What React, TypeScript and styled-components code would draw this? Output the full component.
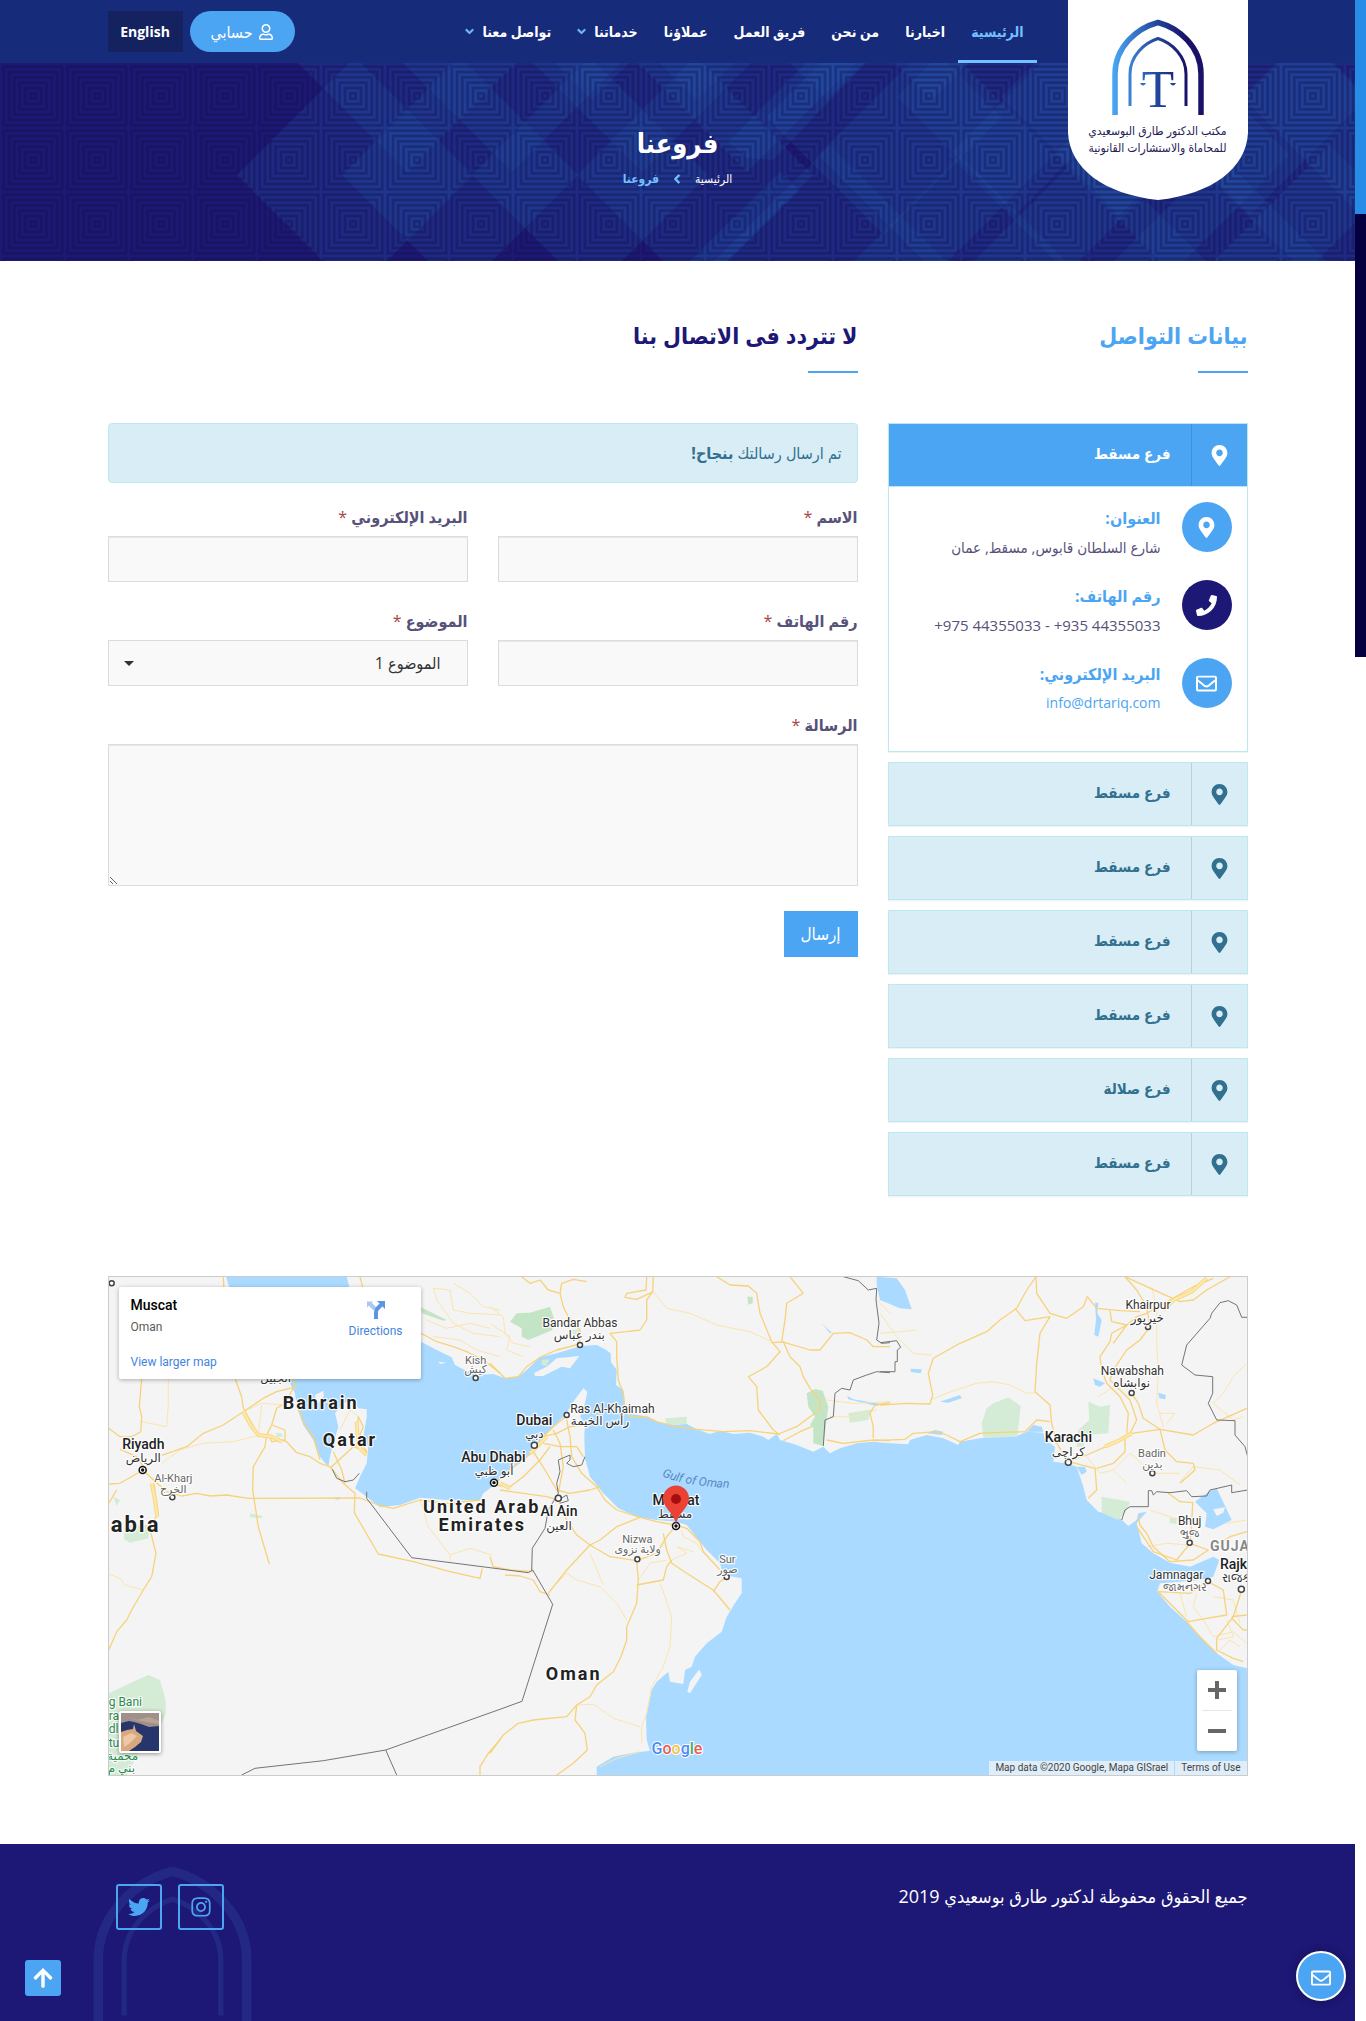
import React, { useId } from "react";
import styled, { createGlobalStyle } from "styled-components";
import {
  FaArrowUp,
  FaChevronDown,
  FaChevronLeft,
  FaInstagram,
  FaMapMarkerAlt,
  FaPhone,
  FaRegEnvelope,
  FaRegUser,
  FaTwitter,
} from "react-icons/fa";

const color = {
  navy: "#1d1775",
  header: "#172b7b",
  sky: "#4ca5f2",
  glow: "#73c0ff",
  ink: "#57527a",
  info: "#d9edf6",
  infoLine: "#bce8f1",
  infoText: "#31708f",
  field: "#f9f9f9",
  line: "#dcdcdc",
};

const GlobalStyle = createGlobalStyle`
  *, *::before, *::after { box-sizing: border-box; }
  body {
    margin: 0;
    background: #fff;
    color: ${color.ink};
    font-family: "Open Sans", "DejaVu Sans Condensed", "DejaVu Sans", sans-serif;
    font-size: 16px;
    line-height: 24px;
  }
  button, input, textarea, select { font: inherit; }
  a { color: inherit; text-decoration: none; }
  h1, h2, h3, p, ul { margin: 0; padding: 0; }
  ul { list-style: none; }
`;

const Page = styled.div`
  padding-right: 11px;
`;

const Container = styled.div`
  width: 100%;
  max-width: 1170px;
  margin: 0 auto;
  padding: 0 15px;
`;

/* ---------- scroll track ---------- */

const ScrollTrack = styled.div`
  position: fixed;
  top: 0;
  right: 0;
  width: 11px;
  height: 657px;
  background: #04003f;
  z-index: 5;
`;

const ScrollThumb = styled.div`
  height: 214px;
  background: #268ce8;
`;

/* ---------- header ---------- */

const Header = styled.header`
  background: ${color.header};
`;

const HeaderRow = styled(Container)`
  display: flex;
  align-items: center;
  height: 63px;
`;

const LogoLink = styled.a`
  position: relative;
  flex: none;
  align-self: flex-start;
  width: 180px;
  height: 63px;
  z-index: 2;
`;

const LogoShape = styled.svg`
  position: absolute;
  top: 0;
  right: 0;
  width: 180px;
  height: 200px;
`;

const LogoName = styled.span`
  position: absolute;
  top: 122px;
  right: 0;
  width: 180px;
  color: #262155;
  font-size: 12px;
  line-height: 17px;
  text-align: center;
  white-space: nowrap;
`;

const Nav = styled.nav`
  display: flex;
  align-self: stretch;
  margin-inline-start: 31px;
`;

const NavLink = styled.a<{ $active?: boolean }>`
  display: flex;
  align-items: center;
  gap: 8px;
  padding: 0 13px;
  border-top: 3px solid transparent;
  border-bottom: 3px solid ${(p) => (p.$active ? color.glow : "transparent")};
  color: ${(p) => (p.$active ? color.glow : "#fff")};
  font-size: 14px;
  font-weight: 700;
  white-space: nowrap;

  svg {
    overflow: visible;
    color: ${color.glow};
    font-size: 9px;
    stroke-width: 50px;
  }
`;

const HeaderTools = styled.div`
  display: flex;
  gap: 7px;
  margin-inline-start: auto;
`;

const AccountLink = styled.a`
  display: flex;
  align-items: center;
  justify-content: center;
  gap: 5px;
  width: 105px;
  height: 41px;
  border-radius: 21px;
  background: ${color.sky};
  color: #fff;
  font-size: 16px;
`;

const LanguageLink = styled.a`
  display: flex;
  align-items: center;
  justify-content: center;
  width: 75px;
  height: 41px;
  background: #14235f;
  color: #fff;
  font-size: 14px;
  font-weight: 700;
`;

/* ---------- banner ---------- */

const Banner = styled.section`
  position: relative;
  height: 198px;
  overflow: hidden;
  background: ${color.navy};
`;

const BannerArt = styled.svg`
  position: absolute;
  top: 0;
  left: 0;
  width: 100%;
  height: 198px;
`;

const BannerText = styled.div`
  position: relative;
  display: flex;
  flex-direction: column;
  align-items: center;
  padding-top: 58px;
  color: #fff;
`;

const BannerTitle = styled.h1`
  font-size: 27px;
  line-height: 44px;
`;

const Crumbs = styled.ol`
  display: flex;
  align-items: center;
  gap: 13px;
  margin: 0;
  padding: 0;
  list-style: none;
  font-size: 12px;
  line-height: 28px;

  svg {
    display: block;
    overflow: visible;
    color: ${color.glow};
    font-size: 10px;
    stroke-width: 50px;
  }
`;

const CurrentCrumb = styled.li`
  color: ${color.glow};
  font-weight: 700;
`;

/* ---------- content ---------- */

const Columns = styled(Container)`
  display: grid;
  grid-template-columns: 360px minmax(0, 1fr);
  gap: 30px;
  padding-top: 52px;
`;

const SectionTitle = styled.h2<{ $tone: string }>`
  display: flex;
  flex-direction: column;
  gap: 14px;
  margin-bottom: 50px;
  color: ${(p) => p.$tone};
  font-size: 23px;
  line-height: 44px;

  &::after {
    content: "";
    width: 50px;
    height: 2px;
    background: ${color.sky};
  }
`;

const BranchList = styled.div`
  display: grid;
  gap: 10px;
`;

const Branch = styled.section`
  border: 1px solid ${color.infoLine};
  background: #fff;
  box-shadow: 0 1px 1px rgba(0, 0, 0, 0.05);
`;

const BranchHeading = styled.h3`
  display: flex;
  font-size: 15px;
`;

const BranchButton = styled.button<{ $open?: boolean }>`
  display: flex;
  align-items: stretch;
  width: 100%;
  height: 62px;
  padding: 0;
  border: 0;
  background: ${(p) => (p.$open ? color.sky : color.info)};
  color: ${(p) => (p.$open ? "#fff" : color.infoText)};
  font-weight: 700;
  cursor: pointer;
`;

const BranchIcon = styled.span`
  display: flex;
  align-items: center;
  justify-content: center;
  width: 56px;
  border-left: 1px solid rgba(0, 0, 0, 0.13);
  font-size: 21px;
`;

const BranchName = styled.span`
  padding: 17px 20px;
`;

const BranchBody = styled.ul`
  display: grid;
  gap: 28px;
  padding: 15px 15px 43px;
  border-top: 1px solid ${color.infoLine};
`;

const Contact = styled.li`
  display: flex;
  gap: 21px;
  height: 50px;
`;

const ContactIcon = styled.span<{ $dark?: boolean }>`
  display: flex;
  flex: none;
  align-items: center;
  justify-content: center;
  width: 50px;
  height: 50px;
  border-radius: 50%;
  background: ${(p) => (p.$dark ? color.navy : color.sky)};
  color: #fff;
  font-size: 21px;
`;

const ContactText = styled.div`
  display: flex;
  flex-direction: column;
  font-size: 15px;
  line-height: 26px;
  white-space: nowrap;
`;

const ContactLabel = styled.strong`
  color: ${color.sky};
  font-size: 16px;
  line-height: 32px;
`;

const MailLink = styled.a`
  color: ${color.sky};
  font-size: 14px;
`;

/* ---------- form ---------- */

const Alert = styled.p`
  margin-bottom: 20px;
  padding: 17px 15px;
  border: 1px solid ${color.infoLine};
  border-radius: 4px;
  background: ${color.info};
  color: ${color.infoText};
  font-size: 16px;
`;

const Form = styled.form`
  display: grid;
  grid-template-columns: 1fr 1fr;
  column-gap: 30px;
  row-gap: 25px;
`;

const Field = styled.div<{ $wide?: boolean }>`
  display: flex;
  flex-direction: column;
  grid-column: ${(p) => (p.$wide ? "1 / -1" : "auto")};
`;

const Label = styled.label`
  height: 33px;
  font-size: 16px;
  line-height: 28px;
  font-weight: 700;
`;

const Required = styled.span`
  color: #a94442;
  font-weight: 400;
`;

const TextInput = styled.input`
  width: 100%;
  height: 46px;
  padding: 6px 12px;
  border: 1px solid ${color.line};
  border-radius: 0;
  background: ${color.field};
  box-shadow: inset 0 1px 1px rgba(0, 0, 0, 0.075);
`;

const SelectWrap = styled.div`
  position: relative;

  &::after {
    content: "";
    position: absolute;
    top: 21px;
    left: 16px;
    border: 5px solid transparent;
    border-top-color: #333;
    border-bottom: 0;
    pointer-events: none;
  }
`;

const Select = styled.select`
  width: 100%;
  height: 46px;
  padding: 0 26px;
  border: 1px solid ${color.line};
  border-radius: 0;
  background: ${color.field};
  color: #333;
  appearance: none;
`;

const TextArea = styled.textarea`
  display: block;
  width: 100%;
  height: 142px;
  padding: 6px 12px;
  border: 1px solid ${color.line};
  border-radius: 0;
  background: ${color.field};
  box-shadow: inset 0 1px 1px rgba(0, 0, 0, 0.075);
`;

const Submit = styled.button`
  justify-self: start;
  width: 74px;
  height: 46px;
  padding: 0;
  border: 0;
  background: ${color.sky};
  color: #fff;
  font-size: 17px;
`;

/* ---------- map ---------- */

const MapSection = styled(Container)`
  padding-top: 80px;
  padding-bottom: 68px;
`;

const MapFrame = styled.div`
  position: relative;
  height: 500px;
  overflow: hidden;
  border: 1px solid #ccc;
  background: #f4f4f4;
  font-family: Roboto, "DejaVu Sans", sans-serif;
`;

const MapSvg = styled.svg`
  display: block;
  width: 100%;
  height: 100%;
`;

const MapCard = styled.div`
  position: absolute;
  top: 10px;
  left: 10px;
  display: flex;
  justify-content: space-between;
  width: 302px;
  height: 92px;
  padding: 9px 18px 9px 12px;
  border-radius: 2px;
  background: #fff;
  box-shadow: 0 1px 4px rgba(0, 0, 0, 0.3);
  font-size: 12px;
  line-height: 16px;
`;

const PlaceInfo = styled.div`
  display: flex;
  flex-direction: column;
`;

const PlaceName = styled.strong`
  color: #000;
  font-size: 14px;
  font-weight: 500;
  line-height: 18px;
`;

const PlaceRegion = styled.span`
  padding-top: 5px;
  color: #5b5b5b;
`;

const MapLink = styled.a`
  margin-top: auto;
  color: #4285e0;
`;

const Directions = styled.a`
  display: flex;
  flex-direction: column;
  align-items: center;
  gap: 3px;
  padding-top: 4px;
  color: #4285e0;
`;

const Zoom = styled.div`
  position: absolute;
  right: 10px;
  bottom: 24px;
  display: grid;
  width: 40px;
  padding: 0 5px;
  border-radius: 2px;
  background: #fff;
  box-shadow: 0 1px 4px rgba(0, 0, 0, 0.3);
`;

const ZoomButton = styled.button`
  display: flex;
  align-items: center;
  justify-content: center;
  height: 40px;
  padding: 0;
  border: 0;
  background: none;

  & + & {
    height: 41px;
    border-top: 1px solid #e6e6e6;
  }
`;

const Satellite = styled.button`
  position: absolute;
  bottom: 22px;
  left: 10px;
  width: 42px;
  height: 42px;
  padding: 0;
  overflow: hidden;
  border: 2px solid #fff;
  border-radius: 2px;
  background: #26356b;
  box-shadow: 0 1px 4px rgba(0, 0, 0, 0.4);

  svg {
    display: block;
  }
`;

const Credits = styled.div`
  position: absolute;
  right: 0;
  bottom: 0;
  display: flex;
  gap: 1px;
  color: #444;
  font-size: 10px;
  line-height: 14px;
`;

const Credit = styled.span`
  padding: 0 6px;
  background: rgba(245, 245, 245, 0.7);
`;

/* ---------- footer ---------- */

const Footer = styled.footer`
  overflow: hidden;
  background: ${color.navy};
  color: #fff;
`;

const FooterRow = styled(Container)`
  position: relative;
  display: flex;
  align-items: flex-start;
  justify-content: space-between;
  height: 177px;
  padding-top: 40px;
`;

const Watermark = styled.svg`
  position: absolute;
  top: 23px;
  left: 0;
  width: 159px;
  height: 164px;
  opacity: 0.12;
`;

const Copyright = styled.p`
  font-size: 18px;
`;

const Social = styled.div`
  position: relative;
  display: flex;
  gap: 16px;
  padding-left: 8px;
`;

const SocialLink = styled.a`
  display: flex;
  align-items: center;
  justify-content: center;
  width: 46px;
  height: 46px;
  border: 2px solid ${color.sky};
  border-radius: 3px;
  color: ${color.sky};
  font-size: 22px;
`;

const ToTop = styled.button`
  position: fixed;
  bottom: 25px;
  left: 25px;
  display: flex;
  align-items: center;
  justify-content: center;
  width: 36px;
  height: 36px;
  padding: 0;
  border: 0;
  border-radius: 3px;
  background: ${color.sky};
  color: #fff;
  font-size: 22px;
`;

const MailButton = styled.button`
  position: fixed;
  right: 20px;
  bottom: 20px;
  display: flex;
  align-items: center;
  justify-content: center;
  width: 50px;
  height: 50px;
  padding: 4px 0 0;
  border: 2px solid #fff;
  border-radius: 50%;
  background: ${color.sky};
  box-shadow: 0 0 8px rgba(0, 0, 0, 0.3);
  color: #fff;
  font-size: 20px;
  z-index: 6;
`;

/* ---------- drawings ---------- */

const outerArch = "M47 115V74C47 47 69 28 90 22.500C111 28 133 47 133 74V115";
const innerArch = "M62 106V74C62 56 76 43 90 38.500C104 43 118 56 118 74V106";

function Logo() {
  const id = useId();
  return (
    <LogoLink href="#" aria-label="مكتب الدكتور طارق البوسعيدي">
      <LogoShape viewBox="0 0 180 200" aria-hidden="true">
        <defs>
          <linearGradient id={id} gradientUnits="userSpaceOnUse" x1="44" y1="70" x2="136" y2="70">
            <stop offset="0" stopColor="#4ca9f5" />
            <stop offset="0.5" stopColor="#20459a" />
            <stop offset="0.8" stopColor="#1a1268" />
          </linearGradient>
        </defs>
        <path d="M0 0H180V133C178 168 145 194 90 200C35 194 2 168 0 133Z" fill="#fff" />
        <g fill="none" stroke={`url(#${id})`}>
          <path d={outerArch} strokeWidth="5.500" />
          <path d={innerArch} strokeWidth="3" />
        </g>
        <text
          x="90"
          y="107"
          textAnchor="middle"
          fontFamily="Liberation Serif, serif"
          fontSize="53"
          fill={`url(#${id})`}
        >
          T
        </text>
        <path d="M72 83h6q-3 5-6 0z" fill="#2f6fc0" />
        <path d="M102 83h6q-3 5-6 0z" fill="#20459a" />
      </LogoShape>
      <LogoName>
        مكتب الدكتور طارق البوسعيدي
        <br />
        للمحاماة والاستشارات القانونية
      </LogoName>
    </LogoLink>
  );
}

const RADIUS = 118;
const diamonds: [number, number][] = [
  [355, 112], [460, 112], [590, 112], [695, 112],
  [407, -9], [512, -9], [642, -9], [747, -9],
  [592, -81], [697, -81], [827, -81], [932, -81],
  [936, 92], [1067, 92], [1172, 92], [1015, 34], [884, 54],
  [1119, 34], [1250, 34], [1305, 92], [1360, 34],
  [830, 200], [960, 210], [1090, 200], [1220, 210], [1330, 200],
];

function Pattern() {
  return (
    <BannerArt aria-hidden="true">
      <defs>
        <pattern id="maze" x="1" y="1" width="64" height="64" patternUnits="userSpaceOnUse">
          <g fill="none" stroke="#0d1040" strokeOpacity="0.36" strokeWidth="2.700">
            {[4, 9.3, 14.7, 20, 25.3, 30.6].map((r) => (
              <rect
                key={r}
                x={32 - r + 1.3}
                y={32 - r + 1.3}
                width={2 * r - 2.6}
                height={2 * r - 2.6}
              />
            ))}
          </g>
        </pattern>
      </defs>
      {diamonds.map(([x, y]) => (
        <polygon
          key={`${x},${y}`}
          points={`${x - RADIUS},${y} ${x},${y - RADIUS} ${x + RADIUS},${y} ${x},${y + RADIUS}`}
          fill="#2658ac"
          fillOpacity="0.27"
        />
      ))}
      <polygon points="806,0 866,0 773,97 747,95 728,79" fill="#2470c8" fillOpacity="0.2" />
      <polygon points="780,109 800,127 728,198 690,198" fill="#2470c8" fillOpacity="0.2" />
      <rect width="100%" height="198" fill="url(#maze)" />
    </BannerArt>
  );
}

/* The map is surveyed in three sheets that share a 3:1 grid; each sheet has its own origin. */
type Sheet = 0 | 1 | 2;
const sheetX = [-9, 381, 771];
const px = (s: Sheet, x: number) => sheetX[s] + x / 3;
const py = (y: number) => y / 3 - 7;
const pts = (s: Sheet, list: string) => {
  const n = list.trim().split(/[\s,]+/).map(Number);
  const out: string[] = [];
  for (let i = 0; i < n.length; i += 2) {
    out.push(`${px(s, n[i]).toFixed(1)},${py(n[i + 1]).toFixed(1)}`);
  }
  return out.join(" ");
};

const sea = [
  pts(0, "740 20 750 60 800 150 963 215 1010 240 1055 262 1065 285 1090 298 1130 315 1180 312"),
  pts(1, "45 325 85 320 110 300 150 262 200 250 250 235 275 228 320 225 345 238 362 250 363 275 380 300 378 345 400 360 405 400 412 430 475 440 500 455 540 465 590 462 620 478 660 492 690 482 730 492 780 488 820 500 835 510 860 492 870 510 920 525 970 545 1000 530 1020 550 1050 535 1100 520 1150 515 1200 520"),
  pts(2, "85 523 90 510 140 495 190 505 235 525 240 515 300 505 350 500 410 498 440 485 490 488 495 510 525 530 520 575 560 580 590 590 600 620 610 650 620 690 655 725 700 735 720 745 745 768 770 750 775 730 800 725 770 760 785 820 820 850 870 878 930 890 1000 860 1018 870 1000 920 960 930 900 935 840 940 832 965 870 1010 920 1055 960 1100 1010 1150 1060 1185 1103 1195 1110 1520"),
  pts(1, "320 1520 320 1490 370 1460 430 1448 480 1442 470 1410 468 1340 485 1260 500 1235 535 1205 540 1235 580 1242 585 1200 605 1190 615 1160 650 1120 695 1085 710 1040 735 1000 755 970 755 925 700 915 690 880 650 840 630 815 590 765 560 755 500 750 440 740 385 715 340 670 300 620 285 565 283 500 285 460 270 440 285 400 292 365 280 355 250 395 230 430 190 470 160 500 130 545 90 580 60 600 20 640 -20 670"),
  pts(0, "1140 690 1090 690 1040 690 960 683 900 705 840 712 800 680 765 655 780 620 800 580 805 530 790 500 800 440 800 418 775 415 760 390 730 400 705 430 715 470 700 520 690 560 685 590 660 560 640 510 610 465 590 410 585 370 570 340 480 250 400 90 378 20"),
].join(" ");

const lakes: [Sheet, string][] = [
  [2, "945 695 985 665 1010 655 1055 750 1000 778 975 770 980 730"],
  [2, "-10 20 50 25 75 60 95 118 60 115 0 90 -10 45"],
  [2, "645 98 655 98 652 130 665 150 655 200 643 195 648 150"],
  [2, "440 485 460 465 485 470 490 485"],
  [2, "92 296 125 298 122 310 92 306"],
  [2, "640 325 675 340 660 350 645 345"],
  [2, "835 368 858 375 855 388 838 385"],
  [2, "140 490 165 480 190 485 185 495"],
  [2, "180 395 240 375 245 385 205 398"],
  [2, "590 590 615 590 620 605 605 615"],
  [1, "1072 378 1090 388 1175 402 1160 408 1075 388"],
  [1, "995 160 1025 188 1020 190"],
  [0, "700 685 720 680 715 690"],
];

const islands: [Sheet, string][] = [
  [1, "133 308 170 290 200 265 268 258 240 295 215 290 160 318 135 318"],
  [1, "628 1198 635 1215 600 1270 592 1265 600 1235"],
  [2, "1000 718 1035 712 1030 728 1010 738"],
  [0, "645 375 670 362 672 378 655 400 648 395"],
  [0, "1015 275 1040 278 1020 282"],
];

const parks: [Sheet, string, boolean?][] = [
  [1, "60 155 80 130 120 128 180 110 192 145 180 150 188 180 115 210 95 200 95 175", true],
  [1, "950 370 975 357 998 362 1015 410 1000 528 970 520 970 475 960 465 975 440 955 410", true],
  [1, "772 80 788 80 788 100 775 104", true],
  [1, "245 180 268 178 268 195 250 195"],
  [1, "525 445 590 440 590 462 530 465"],
  [1, "1075 430 1145 418 1135 450 1080 458"],
  [1, "155 270 178 268 170 288 155 285"],
  [2, "305 460 320 415 340 400 385 382 422 408 412 500 310 505"],
  [2, "595 480 628 450 625 395 660 410 690 405 685 490 620 495 610 530 590 530"],
  [2, "665 680 750 695 740 720 715 750 680 735 665 725"],
  [2, "868 745 890 745 890 762 870 760"],
  [0, "26 1270 85 1242 145 1215 180 1230 197 1290 197 1330 180 1370 120 1440 80 1515 26 1515"],
  [0, "72 765 150 765 145 805 90 818 72 808"],
  [0, "450 730 488 738 486 745 450 742"],
  [0, "963 112 1040 150 1030 152 966 130", true],
  [0, "528 488 545 490 548 500 530 502"],
  [0, "40 680 60 690 50 708"],
];

const roads: [Sheet, string][] = [
  [0, "125 325 118 410 125 440 122 485 95 500 60 500 26 475"],
  [0, "185 556 260 530 310 490 370 465 430 425 495 382 530 365 590 350"],
  [0, "405 325 425 380 430 415 475 495 515 500 560 515 590 548 630 560 660 580 690 590 730 640 765 670 763 728 835 852 940 875 1050 905 1140 925 1147 895"],
  [0, "575 325 585 345 555 400 530 415 515 465 500 495 495 530 460 590 458 660 475 770 508 882"],
  [0, "590 400 610 455 640 500 660 570"],
  [0, "515 465 555 480 555 510 515 515 508 500"],
  [0, "130 600 160 630 200 665 245 678 290 670 330 678 380 675 445 685 780 684 835 705 880 715 960 690 1040 700 1140 690"],
  [0, "160 625 175 735 165 745 153 790 168 850 155 920 130 960 95 1020 80 1050 50 1085 26 1140"],
  [0, "130 600 60 640 26 642"],
  [0, "26 700 50 660"],
  [0, "60 538 110 560 130 590"],
  [0, "700 545 725 600 735 640"],
  [0, "690 595 760 530 800 545 770 500 775 440 790 470 765 530"],
  [0, "370 20 372 60"],
  [0, "780 20 790 60"],
  [0, "963 190 1010 215 1060 230 1100 245 1150 270 1185 298 1200 310"],
  [0, "1200 1410 1165 1450 1140 1490 1140 1515"],
  [1, "0 280 45 325 85 320 110 290 150 262 200 240 270 222"],
  [1, "95 20 120 40 150 30 175 60 210 70 220 110 235 140 270 180 268 222"],
  [1, "210 70 215 40 250 28 290 35"],
  [1, "490 20 488 65 470 90 470 150 450 180 410 185 360 190 380 215 380 260 385 330 400 370 405 420 415 438 475 442 500 455 560 470 620 478 700 485 780 482 865 492 920 470 960 440 990 420 990 390 960 355 940 320 930 290 900 260 880 215"],
  [1, "470 20 468 60 410 70 405 82 440 88 490 65"],
  [1, "680 20 720 45 775 48 800 70 810 130 845 215 870 245 830 290 775 320 800 350 805 420 850 480 870 495"],
  [1, "900 20 940 70 890 100 885 150 875 215 960 240 990 240 1030 190 1080 188 1130 210 1150 230 1200 230"],
  [1, "845 218 878 216"],
  [1, "880 512 930 485 965 470"],
  [1, "1010 510 1060 520 1150 510 1200 512"],
  [1, "1200 398 1155 405 1140 430 1150 470 1150 505"],
  [1, "240 430 190 470 160 500 130 545 60 600 10 640"],
  [1, "160 500 200 490 240 470 280 465"],
  [1, "130 545 165 600 200 660 240 670 300 660 330 650"],
  [1, "190 480 210 520 220 590 205 670"],
  [1, "230 450 240 500 245 560 275 610 320 650 345 690 380 720 450 742 500 755 555 765 590 775 630 815 640 845 690 900"],
  [1, "160 520 210 530 260 530 280 560"],
  [1, "10 645 60 650 100 620 150 570 180 530"],
  [1, "30 660 100 670 170 680 205 690 230 750 260 795 300 825"],
  [1, "175 970 230 900 300 825 330 810 380 770 450 742"],
  [1, "300 825 360 860 440 872 445 930 440 1000 410 1070 410 1110 393 1160 370 1205 320 1245 300 1280 260 1305 230 1340 130 1350 85 1360 40 1395 0 1450"],
  [1, "260 1305 255 1350 285 1390 292 1440 250 1480 200 1515"],
  [1, "440 872 500 850 530 800 555 770"],
  [1, "520 790 530 840 545 880 590 910 630 935 670 960 720 1020"],
  [1, "440 945 520 930 530 890 545 870"],
  [1, "45 915 90 918 130 930 150 965 180 975"],
  [1, "0 860 10 890 60 900 130 905"],
  [1, "710 920 690 935 670 965"],
  [2, "-20 512 75 508 100 490 170 485 200 495 240 515 300 490 340 488 435 485 470 450 510 455"],
  [2, "0 405 80 400 150 402 158 375 145 310 160 265 240 220 320 185 360 150 410 115 440 60 468 20"],
  [2, "405 115 435 152 510 140 480 190 470 280 465 365 510 405 515 460 530 520 565 575 645 595 650 660 625 685"],
  [2, "468 20 470 70 510 130 560 145 610 110 622 80 650 115 720 122 780 125"],
  [2, "1000 25 940 50 870 90 800 130 770 140 740 165 695 190 690 215 660 260 665 300 680 340 720 380 745 430 740 490"],
  [2, "735 20 770 60 800 110 810 170 780 210 740 240 700 300 690 330 750 390 770 450 750 490"],
  [2, "560 575 620 555 700 520 755 490 840 478 940 495 1000 460 1100 415"],
  [2, "755 370 775 400 790 445 840 478 855 540 890 575 940 580 945 600 900 640"],
  [2, "650 595 700 580 735 545 735 500"],
  [2, "690 122 695 155 740 165 700 220"],
  [2, "735 20 800 50 900 95 940 90 980 60 1050 20"],
  [2, "865 670 900 695 938 698 935 760 930 820 890 870 820 845 790 800 770 770"],
  [2, "775 740 780 765 800 790 820 830 870 875 940 870 985 840 930 820"],
  [2, "985 935 1030 960 1040 1035 980 1045 925 1055 835 965 930 970 980 935"],
  [2, "1085 960 1060 1040 1010 1105 1010 1140 1060 1165 1090 1175"],
  [2, "920 1055 960 1100 1010 1150"],
  [2, "1055 1040 1100 1035"],
  [2, "1055 1045 1090 1080 1100 1080"],
  [2, "1000 830 1050 800 1100 785"],
];

const lanes: [Sheet, string][] = [
  [0, "205 325 205 400 200 470 125 455"],
  [0, "26 912 60 925 75 945 130 960"],
  [0, "185 580 240 540 310 520 400 515 480 495"],
  [0, "430 425 485 400 550 405"],
  [0, "475 495 485 405"],
  [0, "960 690 985 770 1050 855 1050 875"],
  [0, "1050 855 1110 835 1175 855"],
  [0, "720 480 750 420 775 440"],
  [0, "1000 55 1050 60 1060 120 1110 130 1200 135"],
  [0, "1000 55 1010 90 1060 160 1120 190 1200 200"],
  [0, "1060 40 1110 70 1150 110 1200 120"],
  [0, "1000 200 1080 210 1130 240 1200 260"],
  [0, "980 150 1040 175 1110 160 1170 175"],
  [1, "490 65 530 115 600 130 680 165 780 185 845 215"],
  [1, "0 110 40 140 45 190 70 220 120 230"],
  [1, "0 160 60 200 50 240 100 260"],
  [1, "180 960 230 910 260 930 330 950 380 1000 410 1050"],
  [1, "340 945 300 850"],
  [1, "510 940 525 980 545 1040 540 1130 520 1190 485 1250 470 1330 455 1370 455 1420"],
  [1, "260 1305 310 1303 370 1345 450 1370"],
  [1, "330 1490 380 1465 450 1445"],
  [1, "575 780 580 800 620 820 640 850"],
  [1, "545 870 590 850 560 830 610 845"],
  [1, "445 930 480 880 530 870"],
  [1, "1010 390 1090 400 1200 395"],
  [1, "1020 440 1090 440 1160 420"],
  [1, "1160 90 1200 130"],
  [2, "0 130 50 200 100 250 155 255"],
  [2, "0 190 60 185 110 180"],
  [2, "150 390 200 370 290 340 340 335 390 345 440 370 465 368"],
  [2, "815 50 830 120 830 220 835 300 830 400 850 470"],
  [2, "655 380 700 350 740 310 830 300"],
  [2, "620 560 660 610 700 600 740 640"],
  [2, "700 600 750 550 820 610 900 610"],
  [2, "900 635 940 590 1020 600 1080 645"],
  [2, "1100 280 1060 320 1030 370 1000 400 1060 450 1090 440"],
  [2, "840 430 885 430 860 460"],
  [2, "810 720 870 740 930 760"],
  [2, "800 830 860 820 925 825"],
  [2, "950 970 940 1010 970 1050 1000 1100 1060 1085 1100 1120"],
  [2, "900 970 920 1040"],
  [2, "1000 980 1060 990 1080 1060"],
  [2, "1010 1110 1060 1100 1040 1050"],
  [2, "1020 1140 1050 1110 1080 1130"],
  [2, "1040 760 1100 750"],
];

const highways: [Sheet, string][] = [
  [0, "430 425 455 470 475 495 515 500 545 515"],
  [0, "155 640 165 690 172 740"],
  [2, "675 530 720 510 755 490"],
  [2, "980 25 935 65 880 90 850 120"],
  [0, "770 455 775 530 800 555"],
  [1, "120 550 150 520 170 500"],
  [1, "30 640 60 655"],
];

const borders: [Sheet, string][] = [
  [0, "800 665 800 685 935 863 1170 893 1285 908 1298 900 1358 1003 1266 1294 1200 1318 857 1440 670 1472 465 1495 425 1515"],
  [0, "857 1440 890 1515"],
  [0, "697 598 710 625 735 635 760 630 778 610"],
  [1, "125 900 127 835 165 775 175 720 205 670 200 640 210 605 205 570 240 555 240 570 230 580 250 590 275 585 285 560"],
  [1, "205 690 230 675 235 692 210 700"],
  [1, "1060 20 1105 32 1135 60 1160 55 1158 90 1167 160 1160 210 1175 220 1200 218"],
  [1, "1000 528 1005 450 1030 440 1035 370 1055 355 1080 360 1090 330 1130 315 1160 305 1200 308"],
  [2, "0 218 50 212 62 232 52 240 52 275 45 275 45 305 0 305"],
  [2, "1103 142 1085 142 1070 105 1045 92 1020 98 995 130 990 145 920 225 905 285 945 315 998 320 998 370 985 400 1010 450 1065 452 1065 495 1095 530 1103 560"],
  [2, "725 750 735 720 750 710 805 710 805 662 815 662 820 675 830 665 870 668 920 662 935 680 980 678 990 660 1055 645 1055 668 1103 660"],
];

type Place = [string, Sheet, number, number, ("country" | "city" | "town" | "minor" | "park" | "state")?, boolean?];
const places: Place[] = [
  ["Bahrain", 0, 662, 418, "country"],
  ["Qatar", 0, 750, 528, "country"],
  ["United Arab", 0, 1145, 730, "country"],
  ["Emirates", 0, 1147, 782, "country"],
  ["Oman", 1, 251, 1230, "country"],
  ["الجبيل", 0, 527, 336, "town"],
  ["Riyadh", 0, 130, 538, "city"],
  ["الرياض", 0, 130, 576, "town"],
  ["Al-Kharj", 0, 220, 636, "minor"],
  ["الخرج", 0, 220, 668, "minor"],
  ["Kish", 0, 1127, 281, "minor"],
  ["كيش", 0, 1127, 309, "minor"],
  ["Abu Dhabi", 0, 1180, 577, "city"],
  ["أبو ظبي", 0, 1182, 615, "town"],
  ["Dubai", 1, 133, 465, "city"],
  ["دبي", 1, 133, 504, "town"],
  ["Bandar Abbas", 1, 270, 171, "town"],
  ["بندر عباس", 1, 268, 207, "town"],
  ["Ras Al-Khaimah", 1, 367, 430, "town"],
  ["رأس الخيمة", 1, 330, 464, "town"],
  ["Al Ain", 1, 207, 738, "city"],
  ["العين", 1, 207, 779, "town"],
  ["Muscat", 1, 558, 706, "city"],
  ["مسقط", 1, 555, 745, "town"],
  ["Nizwa", 1, 442, 818, "minor"],
  ["ولاية نزوى", 1, 443, 850, "minor"],
  ["Sur", 1, 712, 878, "minor"],
  ["صور", 1, 712, 908, "minor"],
  ["Karachi", 2, 565, 516, "city"],
  ["کراچی", 2, 565, 557, "town"],
  ["Khairpur", 2, 804, 117, "town"],
  ["خیرپور", 2, 802, 156, "town"],
  ["Nawabshah", 2, 757, 315, "town"],
  ["نوابشاه", 2, 755, 352, "town"],
  ["Badin", 2, 816, 560, "minor"],
  ["بدین", 2, 817, 595, "minor"],
  ["Bhuj", 2, 929, 765, "town"],
  ["ભુજ", 2, 929, 800, "minor"],
  ["Jamnagar", 2, 889, 927, "town"],
  ["જામનગર", 2, 915, 962, "minor"],
  ["GUJA", 2, 990, 842, "state", true],
  ["Rajk", 2, 1020, 897, "city", true],
  ["રાજક", 2, 1027, 936, "town", true],
  ["g Bani", 0, 26, 1308, "park", true],
  ["ra", 0, 26, 1349, "park", true],
  ["dli", 0, 26, 1390, "park", true],
  ["tu", 0, 26, 1430, "park", true],
  ["محمية", 0, 68, 1470, "park"],
  ["بني م", 0, 64, 1505, "park"],
];

const placeStyle = {
  country: { fontSize: 18, fontWeight: 700, fill: "#222", letterSpacing: 2 },
  city: { fontSize: 14, fontWeight: 500, fill: "#222" },
  town: { fontSize: 12, fill: "#333" },
  minor: { fontSize: 11, fill: "#666" },
  park: { fontSize: 12, fill: "#2b8a50" },
  state: { fontSize: 14, fontWeight: 700, fill: "#888", letterSpacing: 1 },
};

const dots: [Sheet, number, number, number?][] = [
  [0, 35, 40], [0, 217, 682], [0, 1127, 324], [1, 270, 225], [1, 230, 435], [1, 133, 526, 3],
  [1, 205, 685, 3], [1, 442, 868], [1, 710, 921], [2, 804, 171], [2, 755, 369],
  [2, 565, 577, 3], [2, 817, 610], [2, 929, 818], [2, 984, 933], [2, 1084, 958, 3],
];
const capitals: [Sheet, number, number][] = [[0, 128, 600], [0, 1182, 638], [1, 558, 768]];

function RegionMap() {
  const line = (list: [Sheet, string][], stroke: string, width: number) => (
    <g fill="none" stroke={stroke} strokeWidth={width} strokeLinejoin="round">
      {list.map(([s, p], i) => (
        <polyline key={i} points={pts(s, p)} />
      ))}
    </g>
  );
  return (
    <MapSvg viewBox="0 0 1138 498" preserveAspectRatio="xMidYMid slice" role="img" aria-label="Muscat, Oman">
      <rect width="1138" height="498" fill="#f4f4f4" />
      <polygon points={sea} fill="#aadaff" />
      {lakes.map(([s, p], i) => (
        <polygon key={i} points={pts(s, p)} fill="#aadaff" />
      ))}
      {islands.map(([s, p], i) => (
        <polygon key={i} points={pts(s, p)} fill="#f4f4f4" />
      ))}
      {parks.map(([s, p, deep], i) => (
        <polygon key={i} points={pts(s, p)} fill={deep ? "#c3e5c6" : "#d4ebd5"} />
      ))}
      {line(lanes, "#fbe5ae", 1)}
      {line(roads, "#f7d27a", 1.3)}
      {line(highways, "#f9d883", 4)}
      {line(highways, "#fde9ab", 2)}
      {line(borders, "#747474", 1)}
      <g fill="#fff" stroke="#444" strokeWidth="1.500">
        {dots.map(([s, x, y, r]) => (
          <circle key={`${s}${x}`} cx={px(s, x)} cy={py(y)} r={r ?? 2.5} />
        ))}
      </g>
      {capitals.map(([s, x, y]) => (
        <g key={x}>
          <circle cx={px(s, x)} cy={py(y)} r="3.500" fill="#fff" stroke="#111" strokeWidth="1.500" />
          <circle cx={px(s, x)} cy={py(y)} r="1.700" fill="#111" />
        </g>
      ))}
      <g stroke="#fff" strokeOpacity="0.85" strokeWidth="2.500" strokeLinejoin="round">
        {places.map(([text, s, x, y, kind = "town", start]) => (
          <text
            key={text + x}
            x={px(s, x)}
            y={py(y)}
            textAnchor={start ? "start" : "middle"}
            paintOrder="stroke"
            {...placeStyle[kind]}
          >
            {text}
          </text>
        ))}
        <text
          x={px(0, 32)}
          y={py(786)}
          paintOrder="stroke"
          fontSize="22"
          fontWeight="700"
          fill="#222"
          letterSpacing="2"
        >
          abia
        </text>
      </g>
      <path id="gulf" d="M553 199Q575 209 622 211" fill="none" />
      <text fontSize="12" fill="#5589c4" fontStyle="italic">
        <textPath href="#gulf">Gulf of Oman</textPath>
      </text>
      <path
        d="M567 247C565 236 554 231 554 221.500A13 13 0 0 1 580 221.500C580 231 569 236 567 247Z"
        fill="#ea4335"
      />
      <circle cx="567" cy="222" r="5" fill="#a50e0e" />
      <text
        x="568"
        y="477"
        textAnchor="middle"
        fontSize="16"
        fontWeight="500"
        stroke="#fff"
        strokeWidth="2"
        paintOrder="stroke"
      >
        <tspan fill="#4a8af4">G</tspan>
        <tspan fill="#e4604f">o</tspan>
        <tspan fill="#f5c242">o</tspan>
        <tspan fill="#4a8af4">g</tspan>
        <tspan fill="#4aa967">l</tspan>
        <tspan fill="#e4604f">e</tspan>
      </text>
    </MapSvg>
  );
}

/* ---------- page ---------- */

const menu = [
  { text: "الرئيسية", active: true },
  { text: "اخبارنا" },
  { text: "من نحن" },
  { text: "فريق العمل" },
  { text: "عملاؤنا" },
  { text: "خدماتنا", more: true },
  { text: "تواصل معنا", more: true },
];

const branches = ["فرع مسقط", "فرع مسقط", "فرع مسقط", "فرع مسقط", "فرع صلالة", "فرع مسقط"];

function LabeledField({
  text,
  wide,
  children,
}: {
  text: string;
  wide?: boolean;
  children: (id: string) => React.ReactNode;
}) {
  const id = useId();
  return (
    <Field $wide={wide}>
      <Label htmlFor={id}>
        {text} <Required>*</Required>
      </Label>
      {children(id)}
    </Field>
  );
}

export default function App() {
  return (
    <Page dir="rtl">
      <GlobalStyle />
      <Header>
        <HeaderRow>
          <Logo />
          <Nav>
            {menu.map((item) => (
              <NavLink key={item.text} href="#" $active={item.active}>
                {item.text}
                {item.more && <FaChevronDown aria-hidden="true" />}
              </NavLink>
            ))}
          </Nav>
          <HeaderTools>
            <AccountLink href="#">
              <FaRegUser aria-hidden="true" />
              حسابي
            </AccountLink>
            <LanguageLink href="#">English</LanguageLink>
          </HeaderTools>
        </HeaderRow>
      </Header>

      <Banner>
        <Pattern />
        <BannerText>
          <BannerTitle>فروعنا</BannerTitle>
          <Crumbs>
            <li>
              <a href="#">الرئيسية</a>
            </li>
            <li aria-hidden="true">
              <FaChevronLeft />
            </li>
            <CurrentCrumb>فروعنا</CurrentCrumb>
          </Crumbs>
        </BannerText>
      </Banner>

      <main>
        <Columns>
          <section>
            <SectionTitle $tone={color.sky}>بيانات التواصل</SectionTitle>
            <BranchList>
              <Branch>
                <BranchHeading>
                  <BranchButton type="button" aria-expanded="true" $open>
                    <BranchIcon>
                      <FaMapMarkerAlt />
                    </BranchIcon>
                    <BranchName>فرع مسقط</BranchName>
                  </BranchButton>
                </BranchHeading>
                <BranchBody>
                  <Contact>
                    <ContactIcon>
                      <FaMapMarkerAlt />
                    </ContactIcon>
                    <ContactText>
                      <ContactLabel>العنوان:</ContactLabel>
                      شارع السلطان قابوس, مسقط, عمان
                    </ContactText>
                  </Contact>
                  <Contact>
                    <ContactIcon $dark>
                      <FaPhone />
                    </ContactIcon>
                    <ContactText>
                      <ContactLabel>رقم الهاتف:</ContactLabel>
                      <span dir="ltr">+975 44355033 - +935 44355033</span>
                    </ContactText>
                  </Contact>
                  <Contact>
                    <ContactIcon>
                      <FaRegEnvelope />
                    </ContactIcon>
                    <ContactText>
                      <ContactLabel>البريد الإلكتروني:</ContactLabel>
                      <MailLink href="mailto:info@drtariq.com">info@drtariq.com</MailLink>
                    </ContactText>
                  </Contact>
                </BranchBody>
              </Branch>
              {branches.map((name, i) => (
                <Branch key={i}>
                  <BranchHeading>
                    <BranchButton type="button" aria-expanded="false">
                      <BranchIcon>
                        <FaMapMarkerAlt />
                      </BranchIcon>
                      <BranchName>{name}</BranchName>
                    </BranchButton>
                  </BranchHeading>
                </Branch>
              ))}
            </BranchList>
          </section>

          <section>
            <SectionTitle $tone={color.navy}>لا تتردد فى الاتصال بنا</SectionTitle>
            <Alert role="status">
              تم ارسال رسالتك <strong>بنجاح!</strong>
            </Alert>
            <Form>
              <LabeledField text="الاسم">{(id) => <TextInput id={id} type="text" />}</LabeledField>
              <LabeledField text="البريد الإلكتروني">
                {(id) => <TextInput id={id} type="email" />}
              </LabeledField>
              <LabeledField text="رقم الهاتف">{(id) => <TextInput id={id} type="tel" />}</LabeledField>
              <LabeledField text="الموضوع">
                {(id) => (
                  <SelectWrap>
                    <Select id={id}>
                      <option>الموضوع 1</option>
                    </Select>
                  </SelectWrap>
                )}
              </LabeledField>
              <LabeledField text="الرسالة" wide>
                {(id) => <TextArea id={id} />}
              </LabeledField>
              <Submit type="submit">إرسال</Submit>
            </Form>
          </section>
        </Columns>

        <MapSection>
          <MapFrame dir="ltr">
            <RegionMap />
            <MapCard>
              <PlaceInfo>
                <PlaceName>Muscat</PlaceName>
                <PlaceRegion>Oman</PlaceRegion>
                <MapLink href="#">View larger map</MapLink>
              </PlaceInfo>
              <Directions href="#">
                <svg width="20" height="20" viewBox="0 0 20 20" fill="none" aria-hidden="true">
                  <path d="M3 3L9 9" stroke="#aac8f0" strokeWidth="4" />
                  <path d="M1 1.500H7L1 7.500Z" fill="#aac8f0" />
                  <path d="M10 19V12Q10 10 11.500 8.500L16 4" stroke="#5b96e3" strokeWidth="4" />
                  <path d="M11 1H19V9Z" fill="#5b96e3" />
                </svg>
                Directions
              </Directions>
            </MapCard>
            <Satellite type="button" aria-label="Satellite view">
              <svg width="38" height="38" viewBox="0 0 38 38" aria-hidden="true">
                <rect width="38" height="38" fill="#26356b" />
                <path d="M0 0H38V13L28 14L20 11L13 9L8 8L0 10Z" fill="#a0908a" />
                <path d="M5 3L16 7L28 4L38 8V11L25 9L14 7Z" fill="#b7a596" />
                <path d="M0 19L6 17L12 16L13 11L15 18L22 23L20 29L14 34L8 38H0Z" fill="#d8a981" />
                <path d="M2 24L10 20L16 23L9 30L3 34Z" fill="#ecc8a3" />
              </svg>
            </Satellite>
            <Zoom>
              <ZoomButton type="button" aria-label="Zoom in">
                <svg width="18" height="18" viewBox="0 0 18 18" aria-hidden="true">
                  <path d="M7 0h4v7h7v4h-7v7H7v-7H0V7h7z" fill="#666" />
                </svg>
              </ZoomButton>
              <ZoomButton type="button" aria-label="Zoom out">
                <svg width="18" height="18" viewBox="0 0 18 18" aria-hidden="true">
                  <path d="M0 7h18v4H0z" fill="#666" />
                </svg>
              </ZoomButton>
            </Zoom>
            <Credits>
              <Credit>Map data ©2020 Google, Mapa GISrael</Credit>
              <Credit as="a" href="#">
                Terms of Use
              </Credit>
            </Credits>
          </MapFrame>
        </MapSection>
      </main>

      <Footer>
        <FooterRow>
          <Watermark viewBox="44 20 92 95" aria-hidden="true">
            <g fill="none" stroke="#4ca5f2">
              <path d={outerArch} strokeWidth="5.500" />
              <path d={innerArch} strokeWidth="3" />
            </g>
          </Watermark>
          <Copyright>جميع الحقوق محفوظة لدكتور طارق بوسعيدي 2019</Copyright>
          <Social>
            <SocialLink href="#" aria-label="Instagram">
              <FaInstagram />
            </SocialLink>
            <SocialLink href="#" aria-label="Twitter">
              <FaTwitter />
            </SocialLink>
          </Social>
        </FooterRow>
      </Footer>

      <ToTop type="button" aria-label="Back to top">
        <FaArrowUp />
      </ToTop>
      <MailButton type="button" aria-label="Contact us">
        <FaRegEnvelope />
      </MailButton>
      <ScrollTrack aria-hidden="true">
        <ScrollThumb />
      </ScrollTrack>
    </Page>
  );
}
